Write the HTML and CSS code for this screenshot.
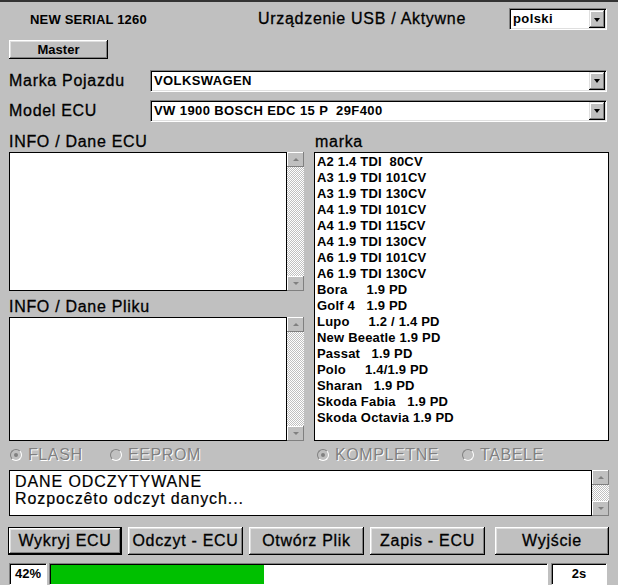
FILE: index.html
```html
<!DOCTYPE html>
<html lang="pl">
<head>
<meta charset="utf-8">
<title>ECU</title>
<link rel="stylesheet" href="styles.css">
</head>
<body>
<div class="app">
  <header class="hdr">
    <div class="serial">NEW SERIAL 1260</div>
    <div class="usb">Urządzenie USB / Aktywne</div>
    <div class="select lang"><span class="val">polski</span><span class="drop"></span></div>
  </header>

  <div class="master-row"><button class="btn master">Master</button></div>

  <div class="field">
    <div class="flabel">Marka Pojazdu</div>
    <div class="select"><span class="val">VOLKSWAGEN</span><span class="drop"></span></div>
  </div>
  <div class="field field2">
    <div class="flabel">Model ECU</div>
    <div class="select"><span class="val">VW 1900 BOSCH EDC 15 P  29F400</span><span class="drop"></span></div>
  </div>

  <div class="mid">
    <div class="lbl l1">INFO / Dane ECU</div>
    <div class="lbl r1">marka</div>
    <div class="tbox b1">
      <div class="tarea"></div>
      <div class="sb"><span class="sbtn up"></span><span class="track"></span><span class="sbtn down"></span></div>
    </div>
    <div class="list">
      <div class="item">A2 1.4 TDI  80CV</div>
      <div class="item">A3 1.9 TDI 101CV</div>
      <div class="item">A3 1.9 TDI 130CV</div>
      <div class="item">A4 1.9 TDI 101CV</div>
      <div class="item">A4 1.9 TDI 115CV</div>
      <div class="item">A4 1.9 TDI 130CV</div>
      <div class="item">A6 1.9 TDI 101CV</div>
      <div class="item">A6 1.9 TDI 130CV</div>
      <div class="item">Bora     1.9 PD</div>
      <div class="item">Golf 4   1.9 PD</div>
      <div class="item">Lupo     1.2 / 1.4 PD</div>
      <div class="item">New Beeatle 1.9 PD</div>
      <div class="item">Passat   1.9 PD</div>
      <div class="item">Polo     1.4/1.9 PD</div>
      <div class="item">Sharan   1.9 PD</div>
      <div class="item">Skoda Fabia   1.9 PD</div>
      <div class="item">Skoda Octavia 1.9 PD</div>
    </div>
    <div class="lbl l2">INFO / Dane Pliku</div>
    <div class="tbox b2">
      <div class="tarea"></div>
      <div class="sb"><span class="sbtn up"></span><span class="track"></span><span class="sbtn down"></span></div>
    </div>
  </div>

  <div class="radios">
    <div class="rgroup left">
      <div class="radio w100"><i class="dot on"></i><span>FLASH</span></div>
      <div class="radio"><i class="dot"></i><span>EEPROM</span></div>
    </div>
    <div class="rgroup right">
      <div class="radio w145"><i class="dot on"></i><span>KOMPLETNE</span></div>
      <div class="radio"><i class="dot"></i><span>TABELE</span></div>
    </div>
  </div>

  <div class="status">
    <div class="stext">
      <div>DANE ODCZYTYWANE</div>
      <div>Rozpoczêto odczyt danych...</div>
    </div>
    <div class="sb"><span class="sbtn up"></span><span class="track"></span><span class="sbtn down"></span></div>
  </div>

  <div class="buttons">
    <button class="btn act default">Wykryj ECU</button>
    <button class="btn act">Odczyt - ECU</button>
    <button class="btn act">Otwórz Plik</button>
    <button class="btn act">Zapis - ECU</button>
    <button class="btn act exit">Wyjście</button>
  </div>

  <div class="progress">
    <div class="pct">42%</div>
    <div class="bar"><div class="fill" style="width:43%"></div></div>
    <div class="time">2s</div>
  </div>
</div>
</body>
</html>
```

FILE: styles.css
```css
html, body {
  margin: 0;
  padding: 0;
}
body {
  background: #c0c0c0;
  font-family: "Liberation Sans", Arial, sans-serif;
  color: #000;
}
.app {
  width: 618px;
  height: 585px;
  box-sizing: border-box;
  border-top: 2px solid #333;
  padding: 0 9px;
  overflow: hidden;
  display: flex;
  flex-direction: column;
}

/* header */
.hdr {
  display: grid;
  grid-template-columns: 249px 251px 98px;
  align-items: center;
  height: 28px;
  margin-top: 4px;
}
.serial {
  padding-left: 21px;
  font-weight: bold;
  font-size: 13px;
  letter-spacing: 0.2px;
}
.usb {
  font-size: 16px;
  letter-spacing: 0.7px;
  -webkit-text-stroke: 0.3px #000;
}

/* select-like combo */
.select {
  display: flex;
  height: 22px;
  box-sizing: border-box;
  background: #fff;
  border: 1px solid;
  border-color: #808080 #fff #fff #808080;
  box-shadow: inset 1px 1px 0 #000, inset -1px -1px 0 #dfdfdf;
  padding: 1px;
}
.select .val {
  flex: 1;
  font-weight: bold;
  font-size: 13px;
  letter-spacing: 0.4px;
  line-height: 18px;
  padding-left: 2px;
  white-space: pre;
}
.select .drop {
  width: 16px;
  height: 18px;
  box-sizing: border-box;
  background: #c0c0c0;
  box-shadow: inset -1px -1px 0 #000, inset 1px 1px 0 #dfdfdf, inset -2px -2px 0 #808080, inset 2px 2px 0 #fff;
  display: flex;
  align-items: center;
  justify-content: center;
}
.select .drop::after {
  content: "";
  border-left: 3px solid transparent;
  border-right: 3px solid transparent;
  border-top: 4px solid #000;
  margin-top: 1px;
}

/* buttons */
.btn {
  font-family: "Liberation Sans", Arial, sans-serif;
  color: #000;
  background: #c0c0c0;
  border: none;
  padding: 0;
  box-shadow: inset -1px -1px 0 #000, inset 1px 1px 0 #fff, inset -2px -2px 0 #808080, inset 2px 2px 0 #dfdfdf;
}
.master-row {
  margin-top: 7px;
  height: 19px;
  display: flex;
}
.master {
  width: 99px;
  height: 19px;
  font-weight: bold;
  font-size: 13px;
}

/* fields */
.field {
  display: grid;
  grid-template-columns: 141px 457px;
  align-items: center;
  height: 22px;
  margin-top: 11px;
}
.field2 {
  margin-top: 8px;
}
.flabel, .lbl {
  font-size: 16px;
  letter-spacing: 0.7px;
  line-height: 18px;
  -webkit-text-stroke: 0.3px #000;
}

/* middle area */
.mid {
  margin-top: 11px;
  display: grid;
  grid-template-columns: 295px 295px;
  column-gap: 10px;
  grid-template-rows: 19px 139px 26px 124px;
}
.l1 { grid-column: 1; grid-row: 1; }
.r1 { grid-column: 2; grid-row: 1; padding-left: 1px; }
.b1 { grid-column: 1; grid-row: 2; }
.l2 { grid-column: 1; grid-row: 3; align-self: end; margin-bottom: 1px; }
.b2 { grid-column: 1; grid-row: 4; }
.list {
  grid-column: 2;
  grid-row: 2 / 5;
  background: #fff;
  border: 1px solid #000;
  padding: 1px 2px;
  font-weight: bold;
  font-size: 13px;
  line-height: 16px;
}
.item {
  white-space: pre;
  letter-spacing: 0.2px;
}

.tbox {
  display: flex;
}
.tarea {
  flex: 1;
  background: #fff;
  border: 1px solid #000;
}
.sb {
  width: 17px;
  display: flex;
  flex-direction: column;
}
.sb .track {
  flex: 1;
  background-color: #fff;
  background-image: repeating-conic-gradient(#c0c0c0 0% 25%, #fff 0% 50%);
  background-size: 2px 2px;
}
.sbtn {
  height: 15px;
  background: #c0c0c0;
  box-shadow: inset -1px -1px 0 #808080, inset 1px 1px 0 #fff;
  display: flex;
  align-items: center;
  justify-content: center;
}
.sbtn.up::after {
  content: "";
  border-left: 3px solid transparent;
  border-right: 3px solid transparent;
  border-bottom: 3px solid #808080;
}
.sbtn.down::after {
  content: "";
  border-left: 3px solid transparent;
  border-right: 3px solid transparent;
  border-top: 3px solid #808080;
}

/* radios */
.radios {
  margin-top: 7px;
  height: 14px;
  display: grid;
  grid-template-columns: 295px 295px;
  column-gap: 10px;
}
.rgroup {
  display: flex;
  align-items: center;
}
.rgroup.left { padding-left: 1px; }
.rgroup.right { padding-left: 3px; }
.radio {
  display: flex;
  align-items: center;
  gap: 6px;
  color: #808080;
  text-shadow: 1px 1px 0 #fff;
  font-size: 16px;
  letter-spacing: 0.6px;
  line-height: 14px;
}
.w100 { width: 100px; }
.w145 { width: 145px; }
.dot {
  width: 12px;
  height: 12px;
  box-sizing: border-box;
  border-radius: 50%;
  border: 1px solid;
  border-color: #808080 #fff #fff #808080;
  background: #c0c0c0;
  display: flex;
  align-items: center;
  justify-content: center;
}
.dot.on::after {
  content: "";
  width: 4px;
  height: 4px;
  border-radius: 50%;
  background: #808080;
}

/* status */
.status {
  margin-top: 8px;
  height: 48px;
  display: flex;
}
.stext {
  flex: 1;
  background: #fff;
  border: 1px solid #000;
  padding: 2px 5px;
  font-size: 16px;
  line-height: 17px;
  letter-spacing: 0.9px;
  -webkit-text-stroke: 0.2px #000;
}

/* action buttons */
.buttons {
  margin-top: 11px;
  height: 28px;
  display: grid;
  grid-template-columns: 114px 115px 115px 115px 1fr;
  column-gap: 6px;
  margin-left: -1px;
}
.act {
  height: 28px;
  font-size: 16px;
  letter-spacing: 0.7px;
  -webkit-text-stroke: 0.3px #000;
}
.act.default {
  border: 1px solid #000;
}
.act.exit {
  margin-left: 4px;
}

/* progress */
.progress {
  margin-top: 8px;
  height: 22px;
  display: flex;
}
.pct, .bar, .time {
  background: #fff;
  box-sizing: border-box;
  border: 1px solid;
  border-color: #808080 #fff #fff #808080;
  box-shadow: inset 1px 1px 0 #000;
}
.pct {
  width: 38px;
  font-weight: bold;
  font-size: 13px;
  line-height: 20px;
  padding-left: 5px;
}
.bar {
  width: 499px;
  margin-left: 2px;
  padding: 1px 0 0 1px;
}
.fill {
  height: 100%;
  background: #00c000;
}
.time {
  width: 56px;
  margin-left: 3px;
  font-weight: bold;
  font-size: 13px;
  line-height: 20px;
  text-align: center;
}
```
